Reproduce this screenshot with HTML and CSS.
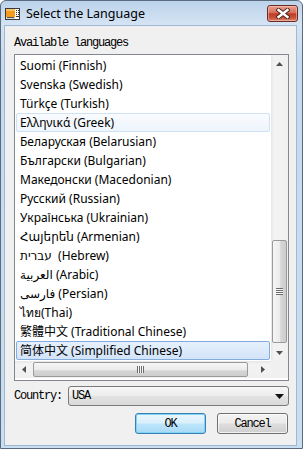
FILE: index.html
```html
<!DOCTYPE html>
<html>
<head>
    <meta charset="utf-8">
    <title>Select the Language</title>
    <link rel="stylesheet" href="styles.css">
</head>
<body>
    <div class="window">
        <div class="title-bar">
            <svg class="app-icon" width="15" height="12" viewBox="0 0 15 12">
                <rect x="0.5" y="0.5" width="14" height="11" fill="#fff" stroke="#3a3a3a"/>
                <rect x="1" y="1" width="9" height="8" fill="#f29b1d"/>
                <rect x="1" y="1" width="9" height="2" fill="#f8c060"/>
                <rect x="1" y="9" width="9" height="2" fill="#d9d9d9"/>
                <rect x="11" y="2" width="1" height="1" fill="#333"/>
                <rect x="13" y="2" width="1" height="1" fill="#333"/>
                <rect x="11" y="4" width="1" height="1" fill="#333"/>
                <rect x="13" y="4" width="1" height="1" fill="#333"/>
                <rect x="11" y="6" width="1" height="1" fill="#333"/>
                <rect x="13" y="6" width="1" height="1" fill="#333"/>
                <rect x="11" y="8" width="3" height="1" fill="#333"/>
                <rect x="2" y="9" width="7" height="1" fill="#555"/>
            </svg>
            <span class="title-text">Select the Language</span>
            <div class="close-btn">
                <svg width="14" height="11" viewBox="0 0 14 11">
                    <path d="M2.5 2 L11.5 9 M11.5 2 L2.5 9" stroke="#4a1f18" stroke-width="4.2" stroke-linecap="square"/>
                    <path d="M2.5 2 L11.5 9 M11.5 2 L2.5 9" stroke="#fff" stroke-width="2.4" stroke-linecap="square"/>
                </svg>
            </div>
        </div>

        <div class="client">
            <div class="group-label">Available languages</div>

            <div class="list-box">
                <ul class="lang-list">
                    <li class="lang-item">Suomi (Finnish)</li>
                    <li class="lang-item">Svenska (Swedish)</li>
                    <li class="lang-item">Türkçe (Turkish)</li>
                    <li class="lang-item hover">Ελληνικά (Greek)</li>
                    <li class="lang-item">Беларуская (Belarusian)</li>
                    <li class="lang-item">Български (Bulgarian)</li>
                    <li class="lang-item">Македонски (Macedonian)</li>
                    <li class="lang-item">Русский (Russian)</li>
                    <li class="lang-item">Українська (Ukrainian)</li>
                    <li class="lang-item">Հայերեն (Armenian)</li>
                    <li class="lang-item">עברית&nbsp; (Hebrew)</li>
                    <li class="lang-item">العربية (Arabic)</li>
                    <li class="lang-item">فارسی (Persian)</li>
                    <li class="lang-item">ไทย(Thai)</li>
                    <li class="lang-item">繁體中文 (Traditional Chinese)</li>
                    <li class="lang-item selected">简体中文 (Simplified Chinese)</li>
                </ul>

                <div class="vscroll">
                    <div class="sb-arrow">
                        <svg width="7" height="4" viewBox="0 0 7 4"><polygon points="3.5,0 7,4 0,4" fill="#505050"/></svg>
                    </div>
                    <div class="sb-track">
                        <div class="sb-thumb v-thumb">
                            <span class="grip-v"></span>
                        </div>
                    </div>
                    <div class="sb-arrow">
                        <svg width="7" height="4" viewBox="0 0 7 4"><polygon points="0,0 7,0 3.5,4" fill="#505050"/></svg>
                    </div>
                </div>

                <div class="hscroll">
                    <div class="sb-arrow">
                        <svg width="4" height="7" viewBox="0 0 4 7"><polygon points="0,3.5 4,0 4,7" fill="#505050"/></svg>
                    </div>
                    <div class="sb-track">
                        <div class="sb-thumb h-thumb">
                            <span class="grip-h"></span>
                        </div>
                    </div>
                    <div class="sb-arrow">
                        <svg width="4" height="7" viewBox="0 0 4 7"><polygon points="0,0 4,3.5 0,7" fill="#505050"/></svg>
                    </div>
                </div>

                <div class="sb-corner"></div>
            </div>

            <div class="country-row">
                <label class="mono-label" for="country">Country:</label>
                <div class="combo" id="country">
                    <span class="combo-value">USA</span>
                    <svg width="9" height="5" viewBox="0 0 9 5"><polygon points="0,0 9,0 4.5,5" fill="#111"/></svg>
                </div>
            </div>

            <div class="buttons">
                <button class="btn btn-default">OK</button>
                <button class="btn">Cancel</button>
            </div>
        </div>
    </div>
</body>
</html>
```

FILE: styles.css
```css
body {
    margin: 0;
    background-color: #fff;
    font-family: "Noto Sans", "DejaVu Sans", "Noto Sans CJK SC", sans-serif;
    color: #000;
}

.window {
    width: 303px;
    height: 449px;
    box-sizing: border-box;
    border: 1px solid #5b6a7d;
    border-radius: 6px 6px 0 0;
    background: linear-gradient(#bcd3eb, #d5e4f4 24px, #c6daef 60px, #cadef2);
    display: flex;
    flex-direction: column;
}

/* title bar */
.title-bar {
    height: 24px;
    display: flex;
    align-items: center;
    padding-left: 4px;
}

.app-icon {
    flex: none;
    margin-top: 1px;
}

.title-text {
    margin-left: 6px;
    font-size: 12.5px;
    color: #000;
    margin-top: 1px;
}

.close-btn {
    margin-left: auto;
    margin-right: 4px;
    align-self: flex-start;
    margin-top: 4px;
    width: 31px;
    height: 17px;
    box-sizing: border-box;
    border: 1px solid #6b2b22;
    border-radius: 3px;
    background: linear-gradient(#e9a08c, #d6705a 45%, #c03c28 52%, #c9523a 80%, #de8e72);
    display: flex;
    align-items: center;
    justify-content: center;
    box-shadow: inset 0 0 0 1px rgba(255, 220, 210, 0.45);
}

/* client area */
.client {
    flex: 1;
    margin: 0 5px 2px 3px;
    border: 1px solid #9fb8d4;
    background-color: #f0f0f0;
    padding: 9px 7px 0 9px;
    display: flex;
    flex-direction: column;
}

.group-label,
.mono-label,
.combo-value,
.btn {
    font-family: "Liberation Mono", "DejaVu Sans Mono", monospace;
    font-size: 12px;
    letter-spacing: -1.2px;
    color: #000;
}

.group-label {
    line-height: 16px;
    margin-bottom: 3px;
}

/* list box */
.list-box {
    height: 327px;
    box-sizing: border-box;
    border: 1px solid #828790;
    background-color: #fff;
    display: grid;
    grid-template-columns: 256px 17px;
    grid-template-rows: 306px 17px;
}

.lang-list {
    list-style: none;
    margin: 0;
    padding: 1px 0 0 0;
    overflow: hidden;
}

.lang-item {
    height: 19px;
    box-sizing: border-box;
    margin: 0 1px;
    padding-left: 3px;
    border: 1px solid transparent;
    border-radius: 2px;
    font-size: 12px;
    line-height: 17px;
    white-space: nowrap;
    overflow: hidden;
}

.lang-item.hover {
    border-color: #cfe1f5;
    background: linear-gradient(#f9fbfe, #eef5fd);
}

.lang-item.selected {
    border-color: #84acdd;
    background: linear-gradient(#e6f0fc, #d2e4fa);
}

/* scrollbars */
.vscroll,
.hscroll {
    display: flex;
    background: #f0f0f0;
}

.vscroll {
    flex-direction: column;
    background: linear-gradient(to right, #e6e6e6, #f3f3f3 3px, #f0f0f0);
}

.hscroll {
    background: linear-gradient(#e6e6e6, #f3f3f3 3px, #f0f0f0);
}

.sb-arrow {
    flex: none;
    width: 17px;
    height: 17px;
    display: flex;
    align-items: center;
    justify-content: center;
}

.sb-track {
    flex: 1;
    display: flex;
}

.vscroll .sb-track {
    flex-direction: column;
}

.sb-thumb {
    box-sizing: border-box;
    border: 1px solid #9a9a9a;
    border-radius: 2px;
    display: flex;
    align-items: center;
    justify-content: center;
}

.v-thumb {
    margin: 168px 0 0 1px;
    width: 15px;
    height: 103px;
    background: linear-gradient(to right, #f6f6f6, #ececec 50%, #d6d6d6 60%, #cdcdcd);
}

.h-thumb {
    margin: 1px 0 0 1px;
    width: 215px;
    height: 15px;
    background: linear-gradient(#f6f6f6, #ececec 50%, #d6d6d6 60%, #cdcdcd);
}

.grip-v {
    width: 7px;
    height: 7px;
    background: repeating-linear-gradient(#6a6a6a 0, #6a6a6a 1px, #fafafa 1px, #fafafa 2px);
}

.grip-h {
    width: 7px;
    height: 7px;
    background: repeating-linear-gradient(to right, #6a6a6a 0, #6a6a6a 1px, #fafafa 1px, #fafafa 2px);
}

.sb-corner {
    background-color: #f0f0f0;
}

/* country */
.country-row {
    margin-top: 5px;
    display: flex;
    align-items: center;
    height: 20px;
}

.mono-label {
    width: 54px;
}

.combo {
    flex: 1;
    height: 20px;
    box-sizing: border-box;
    border: 1px solid #7a7a7a;
    border-radius: 3px;
    background: linear-gradient(#f7f7f7, #ececec 50%, #e2e2e2 52%, #dadada);
    display: flex;
    align-items: center;
    justify-content: space-between;
    padding: 0 4px 0 3px;
}

/* buttons */
.buttons {
    margin-top: 7px;
    display: flex;
    justify-content: flex-end;
    gap: 11px;
    padding-right: 1px;
}

.btn {
    width: 71px;
    height: 21px;
    box-sizing: border-box;
    border: 1px solid #707070;
    border-radius: 3px;
    background: linear-gradient(#f3f3f3, #ebebeb 48%, #dddddd 52%, #cfcfcf);
    padding: 0;
    box-shadow: inset 0 0 0 1px rgba(255, 255, 255, 0.7);
}

.btn-default {
    border-color: #3c7fb1;
    background: linear-gradient(#eaf6fd, #d9f0fc 48%, #bee6fd 52%, #a7d9f5);
    box-shadow: inset 0 0 0 1px #7fd3f9;
}
```
